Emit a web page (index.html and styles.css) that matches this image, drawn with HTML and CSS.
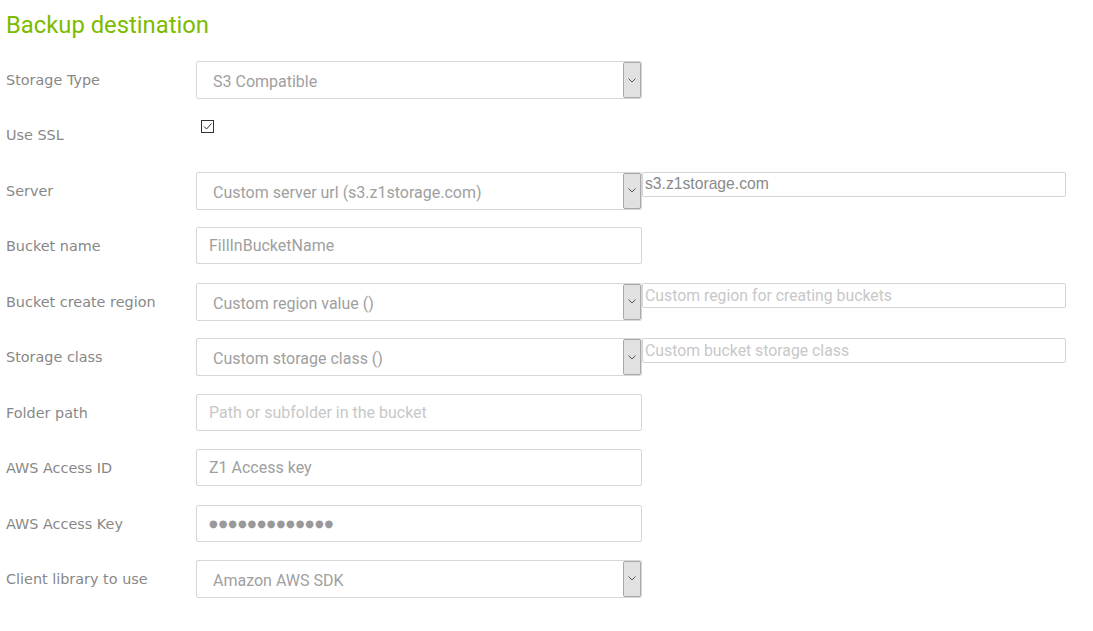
FILE: index.html
```html
<!DOCTYPE html>
<html lang="en">
<head>
<meta charset="utf-8">
<title>Backup destination</title>
<link rel="stylesheet" href="styles.css">
</head>
<body>
<div class="page">
  <h1 class="title">Backup destination</h1>
  <div class="form">
    <div class="row">
      <label class="label">Storage Type</label>
      <div class="select"><span class="select-text">S3 Compatible</span><span class="select-btn"><svg width="8" height="5" viewBox="0 0 8 5"><path d="M0.5 0.5 L4 4 L7.5 0.5" fill="none" stroke="#555" stroke-width="1"/></svg></span></div>
    </div>
    <div class="row">
      <label class="label">Use SSL</label>
      <span class="checkbox"><svg width="11" height="11" viewBox="0 0 11 11"><path d="M2 5.5 L4.5 8 L9.5 2.5" fill="none" stroke="#333" stroke-width="1"/></svg></span>
    </div>
    <div class="row">
      <label class="label">Server</label>
      <div class="select"><span class="select-text">Custom server url (s3.z1storage.com)</span><span class="select-btn"><svg width="8" height="5" viewBox="0 0 8 5"><path d="M0.5 0.5 L4 4 L7.5 0.5" fill="none" stroke="#555" stroke-width="1"/></svg></span></div>
      <div class="extra value">s3.z1storage.com</div>
    </div>
    <div class="row">
      <label class="label">Bucket name</label>
      <div class="input">FillInBucketName</div>
    </div>
    <div class="row">
      <label class="label">Bucket create region</label>
      <div class="select"><span class="select-text">Custom region value ()</span><span class="select-btn"><svg width="8" height="5" viewBox="0 0 8 5"><path d="M0.5 0.5 L4 4 L7.5 0.5" fill="none" stroke="#555" stroke-width="1"/></svg></span></div>
      <div class="extra placeholder">Custom region for creating buckets</div>
    </div>
    <div class="row">
      <label class="label">Storage class</label>
      <div class="select"><span class="select-text">Custom storage class ()</span><span class="select-btn"><svg width="8" height="5" viewBox="0 0 8 5"><path d="M0.5 0.5 L4 4 L7.5 0.5" fill="none" stroke="#555" stroke-width="1"/></svg></span></div>
      <div class="extra placeholder">Custom bucket storage class</div>
    </div>
    <div class="row">
      <label class="label">Folder path</label>
      <div class="input input-placeholder">Path or subfolder in the bucket</div>
    </div>
    <div class="row">
      <label class="label">AWS Access ID</label>
      <div class="input">Z1 Access key</div>
    </div>
    <div class="row">
      <label class="label">AWS Access Key</label>
      <div class="input password">●●●●●●●●●●●●●</div>
    </div>
    <div class="row">
      <label class="label">Client library to use</label>
      <div class="select"><span class="select-text">Amazon AWS SDK</span><span class="select-btn"><svg width="8" height="5" viewBox="0 0 8 5"><path d="M0.5 0.5 L4 4 L7.5 0.5" fill="none" stroke="#555" stroke-width="1"/></svg></span></div>
    </div>
  </div>
</div>
</body>
</html>
```
FILE: styles.css
```css
html, body {
  margin: 0;
  padding: 0;
  background: #ffffff;
}
body {
  font-family: "DejaVu Sans", sans-serif;
}
.page {
  padding: 0 6px;
}
.title {
  margin: 0 0 22px 0;
  padding-top: 11px;
  font-family: Roboto, sans-serif;
  font-weight: 400;
  font-size: 23.8px;
  line-height: 28px;
  color: #7cbb00;
}
.form {
  display: flex;
  flex-direction: column;
  gap: 17.45px;
}
.row {
  display: flex;
  align-items: flex-start;
  height: 38px;
}
.label {
  width: 190px;
  flex: none;
  font-size: 14.4px;
  line-height: 38px;
  color: #888888;
}
.select {
  box-sizing: border-box;
  width: 446px;
  height: 38px;
  flex: none;
  display: flex;
  align-items: center;
  border: 1px solid #d6d6d6;
  border-radius: 2px;
  font-family: Roboto, sans-serif;
  font-size: 16px;
  color: #a0a0a0;
}
.select-text {
  padding-left: 16px;
  padding-top: 3px;
}
.select-btn {
  box-sizing: border-box;
  margin-left: auto;
  width: 18px;
  height: 36px;
  display: flex;
  align-items: center;
  justify-content: center;
  background: #e1e1e1;
  border: 1px solid #a9a9a9;
  border-radius: 2px;
}
.input {
  box-sizing: border-box;
  width: 446px;
  height: 37px;
  flex: none;
  display: flex;
  align-items: center;
  padding-left: 12px;
  border: 1px solid #d6d6d6;
  border-radius: 2px;
  font-family: Roboto, sans-serif;
  font-size: 16px;
  color: #a0a0a0;
}
.input-placeholder {
  color: #c8c8c8;
}
.password {
  font-family: "DejaVu Sans", sans-serif;
  font-size: 10px;
  letter-spacing: 0.9px;
  padding-top: 1px;
  color: #999999;
}
.checkbox {
  box-sizing: border-box;
  margin: 3.5px 0 0 5px;
  width: 13px;
  height: 13px;
  display: flex;
  align-items: center;
  justify-content: center;
  border: 1px solid #333333;
  background: #ffffff;
}
.extra {
  box-sizing: border-box;
  width: 424px;
  height: 25px;
  flex: none;
  display: flex;
  align-items: center;
  padding-left: 2px;
  border: 1px solid #d4d4d4;
  border-radius: 2px;
}
.extra.value {
  font-family: "Liberation Sans", sans-serif;
  font-size: 15.7px;
  color: #8a8a8a;
}
.extra.placeholder {
  font-family: Roboto, sans-serif;
  font-size: 15.8px;
  color: #c8c8c8;
}
```
